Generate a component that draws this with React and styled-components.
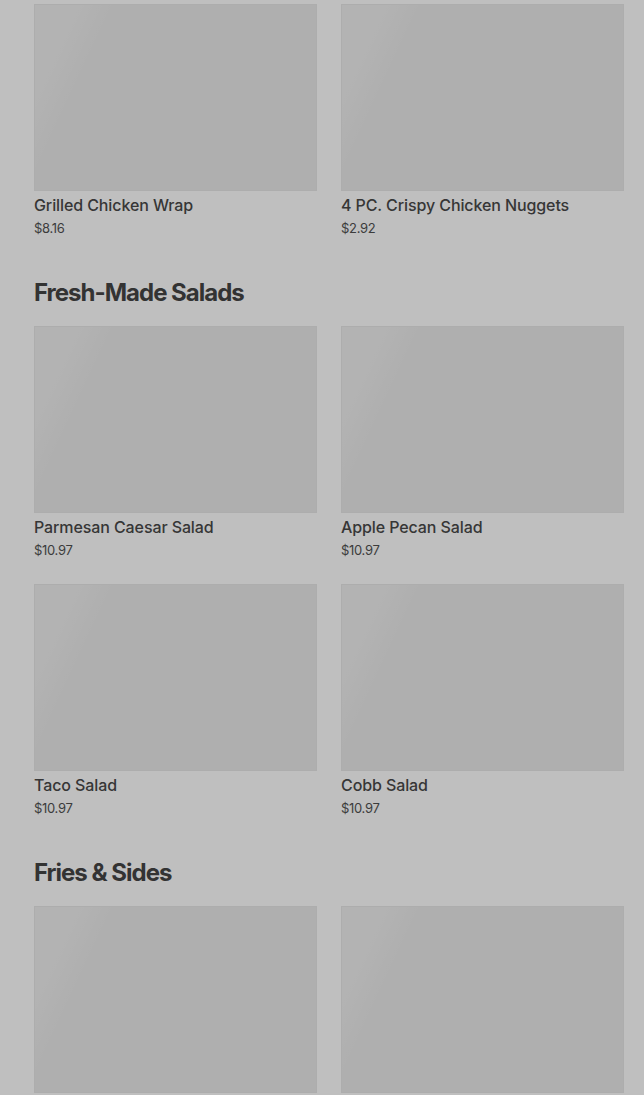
import React from "react";
import styled, { createGlobalStyle } from "styled-components";

const GlobalStyle = createGlobalStyle`
  html, body {
    margin: 0;
    padding: 0;
    background: #bfbfbf;
    overflow: hidden;
  }
  body {
    font-family: Inter, "Noto Sans", "Liberation Sans", sans-serif;
    color: #363636;
  }
`;

const Page = styled.div`
  padding: 4px 20px 0 34px;
`;

const Section = styled.section`
  margin-bottom: 38px;
`;

const SectionTitle = styled.h2`
  margin: 0 0 17px;
  font-size: 24px;
  line-height: 32px;
  font-weight: 700;
  letter-spacing: -1px;
  color: #333333;
`;

const Grid = styled.div`
  display: grid;
  grid-template-columns: 1fr 1fr;
  column-gap: 24px;
  row-gap: 23px;
`;

const Card = styled.div`
  display: flex;
  flex-direction: column;
`;

const Thumb = styled.div`
  height: 187px;
  box-sizing: border-box;
  border: 1px solid #adadad;
  background:
    linear-gradient(115deg, rgba(255, 255, 255, 0.05) 0 12%, rgba(255, 255, 255, 0) 22%),
    #afafaf;
`;

const ItemName = styled.div`
  margin-top: 4px;
  font-size: 16px;
  line-height: 20px;
  font-weight: 500;
  letter-spacing: -0.1px;
  color: #363636;
`;

const ItemPrice = styled.div`
  margin-top: 2px;
  font-size: 13px;
  line-height: 22px;
  letter-spacing: -0.3px;
  color: #3c3c3c;
`;

const sections = [
  {
    title: null,
    items: [
      { name: "Grilled Chicken Wrap", price: "$8.16" },
      { name: "4 PC. Crispy Chicken Nuggets", price: "$2.92" },
    ],
  },
  {
    title: "Fresh-Made Salads",
    items: [
      { name: "Parmesan Caesar Salad", price: "$10.97" },
      { name: "Apple Pecan Salad", price: "$10.97" },
      { name: "Taco Salad", price: "$10.97" },
      { name: "Cobb Salad", price: "$10.97" },
    ],
  },
  {
    title: "Fries & Sides",
    items: [{ key: "fries" }, { key: "sides" }],
  },
];

export default function App() {
  return (
    <>
      <GlobalStyle />
      <Page>
        {sections.map((section, i) => (
          <Section key={i}>
            {section.title && <SectionTitle>{section.title}</SectionTitle>}
            <Grid>
              {section.items.map((item) => (
                <Card key={item.name || item.key}>
                  <Thumb />
                  {item.name && <ItemName>{item.name}</ItemName>}
                  {item.price && <ItemPrice>{item.price}</ItemPrice>}
                </Card>
              ))}
            </Grid>
          </Section>
        ))}
      </Page>
    </>
  );
}
